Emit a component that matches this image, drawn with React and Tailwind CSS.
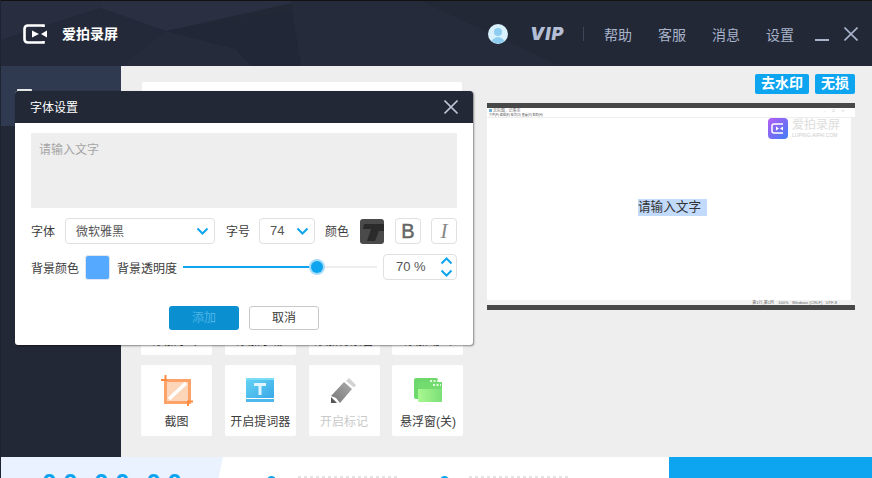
const CJK = { fontFamily: '"Liberation Sans","Noto Sans CJK SC",sans-serif' };

function Tile({ label, muted, children }) {
  return (
    <div className="w-[71px] h-[71px] bg-white rounded-[2px] flex flex-col items-center pt-[7px]">
      <div className="h-[36px] flex items-center justify-center">{children}</div>
      <span className={"mt-[5px] text-[12px] leading-[18px] whitespace-nowrap " + (muted ? "text-[#c9c9c9]" : "text-[#3c3c3c]")}>{label}</span>
    </div>
  );
}

function Chevron({ up, className = "" }) {
  return (
    <svg width="13" height="8" viewBox="0 0 13 8" className={className}>
      <path d={up ? "M1.5 6.5 L6.5 1.5 L11.5 6.5" : "M1.5 1.5 L6.5 6.5 L11.5 1.5"} fill="none" stroke="#0ea5f0" strokeWidth="2" />
    </svg>
  );
}

export default function App() {
  return (
    <div style={CJK} className="relative w-[872px] h-[478px] overflow-hidden flex flex-col bg-[#eeeeee] border-l border-[#1d2330]">
      <header className="relative h-[66px] shrink-0 bg-[#222836] flex items-center border-t border-[#111]">
        <svg className="absolute inset-0" width="872" height="66" viewBox="0 0 872 66">
          <polygon points="0,0 100,0 100,7 0,39" fill="#282e3f" />
          <polygon points="100,7 165,30 120,65 0,65 0,39" fill="#232938" />
          <polygon points="100,0 300,0 165,30 100,7" fill="#2a3042" />
          <polygon points="165,30 235,48 250,65 120,65" fill="#252b3a" />
          <polygon points="165,30 290,10 300,65 250,65 235,48" fill="#212736" />
          <polygon points="290,0 420,0 560,65 300,65" fill="#252b3b" />
        </svg>
        <div className="relative flex items-center ml-[22px]">
          <svg width="24" height="20" viewBox="0 0 24 20">
            <path d="M20.5 3 V1.5 H5 Q1.5 1.5 1.5 5 V15 Q1.5 18.5 5 18.5 H20.5 V17" fill="none" stroke="#fff" strokeWidth="2.6" />
            <polygon points="9,6.5 16,10 9,13.5" fill="#fff" />
            <polygon points="24,6.5 18,10 24,13.5" fill="#fff" />
          </svg>
          <span className="ml-[15px] text-white text-[14px] font-bold leading-none">爱拍录屏</span>
        </div>
        <div className="relative ml-auto flex items-center text-[#a9b4cb] text-[14px] pr-[14px]">
          <svg width="20" height="20" viewBox="0 0 20 20" className="mr-[22px]">
            <circle cx="10" cy="10" r="10" fill="#d8f1fd" />
            <circle cx="10" cy="8" r="4" fill="#8fcdf0" />
            <path d="M3.5 17 Q10 9 16.5 17 Q10 22 3.5 17" fill="#8fcdf0" />
          </svg>
          <span className="w-[38px] italic font-black text-[18px] leading-none tracking-[1px] text-[#b4bed4] whitespace-nowrap" style={{ fontFamily: 'Inter,sans-serif' }}>VIP</span>
          <span className="w-px h-[14px] bg-[#3d4659] ml-[15px] mr-[20px]"></span>
          <span className="mt-[3px]">帮助</span>
          <span className="ml-[26px] mt-[3px]">客服</span>
          <span className="ml-[26px] mt-[3px]">消息</span>
          <span className="ml-[26px] mt-[3px]">设置</span>
          <span className="ml-[21px] w-[14px] h-[2px] bg-[#a9b4cb] mt-[12px]"></span>
          <svg width="14" height="14" viewBox="0 0 14 14" className="ml-[15px]">
            <path d="M0.5 0.5 L13.5 13.5 M13.5 0.5 L0.5 13.5" stroke="#a9b4cb" strokeWidth="1.6" />
          </svg>
        </div>
      </header>

      <div className="flex flex-1 min-h-0">
        <aside className="w-[120px] shrink-0 bg-[#222836] flex flex-col">
          <div className="h-[60px] bg-[#2f3a50] pt-[23px]">
            <div className="ml-[16px] w-[15px] h-[2px] bg-[#e8e8e8] rounded-t-[1px]"></div>
          </div>
        </aside>
        <main className="flex-1 flex pl-[20px] pt-[16px]">
          <section className="w-[322px] shrink-0 flex flex-col">
            <div className="mx-[1px] h-[48px] bg-white rounded-[2px]"></div>
            <div className="mt-[154px] grid grid-cols-[71px_71px_71px_71px] gap-x-[12.8px] gap-y-[10px]">
              <Tile label="添加水印"><span></span></Tile>
              <Tile label="添加字幕"><span></span></Tile>
              <Tile label="添加背景音"><span></span></Tile>
              <Tile label="添加动画"><span></span></Tile>
              <Tile label="截图">
                <svg width="32" height="31" viewBox="0 0 32 31">
                  <rect x="4.5" y="5.5" width="24" height="22" fill="#fdd6ba" stroke="#fda268" strokeWidth="3" />
                  <path d="M8 24 L25 8" stroke="#fff" strokeWidth="3.5" />
                  <path d="M0 5 H6 M4.5 0 V5 M26 26.5 H32 M27 26 V31" stroke="#fd8b3f" strokeWidth="2" />
                </svg>
              </Tile>
              <Tile label="开启提词器">
                <svg width="28" height="24" viewBox="0 0 28 24">
                  <defs>
                    <linearGradient id="tg" x1="0" y1="0" x2="1" y2="1">
                      <stop offset="0" stopColor="#66d4f3" />
                      <stop offset="1" stopColor="#3aa9e8" />
                    </linearGradient>
                  </defs>
                  <rect width="28" height="20" rx="1" fill="url(#tg)" />
                  <rect y="21" width="28" height="3" fill="#4cb8ec" />
                  <rect y="0" width="28" height="2" fill="#7bdcf5" />
                  <path d="M8 6.5 H20 M14 6.5 V17" stroke="#dff4fd" strokeWidth="3" />
                </svg>
              </Tile>
              <Tile label="开启标记" muted>
                <svg width="26" height="25" viewBox="0 0 26 25">
                  <defs>
                    <linearGradient id="mg" x1="0" y1="1" x2="1" y2="0">
                      <stop offset="0" stopColor="#777" />
                      <stop offset="1" stopColor="#aaa" />
                    </linearGradient>
                  </defs>
                  <polygon points="0,18 13,4 21,11 9,25 5,20" fill="url(#mg)" />
                  <polygon points="15,3 18,0 25,7 23,9.5" fill="#d2d2d2" />
                  <polygon points="0,19 6,25 0,25" fill="#555" />
                </svg>
              </Tile>
              <Tile label="悬浮窗(关)">
                <svg width="28" height="24" viewBox="0 0 28 24">
                  <defs>
                    <linearGradient id="gg" x1="0" y1="0" x2="1" y2="0">
                      <stop offset="0" stopColor="#a9f890" />
                      <stop offset="1" stopColor="#7cdf78" />
                    </linearGradient>
                  </defs>
                  <rect width="24" height="21" rx="2" fill="#6ed86c" />
                  <rect x="4" y="4" width="24" height="20" rx="1" fill="url(#gg)" />
                  <rect x="4" y="4" width="24" height="7" fill="#72dc70" />
                  <path d="M16 3 H25 M19 7 H27" stroke="#e2fadc" strokeWidth="2" strokeDasharray="2 1.5" />
                </svg>
              </Tile>
            </div>
          </section>

          <section className="ml-[24px] w-[368px] flex flex-col">
            <div className="h-[20px] -mt-[8px] flex justify-end gap-[6px]">
              <span className="w-[54px] bg-[#0ea5f0] rounded-[2px] text-white text-[14px] font-bold leading-[19px] text-center">去水印</span>
              <span className="w-[40px] bg-[#0ea5f0] rounded-[2px] text-white text-[14px] font-bold leading-[19px] text-center">无损</span>
            </div>
            <div className="mt-[9px] relative h-[207px] bg-white border-y-[5px] border-y-[#484848] flex flex-col">
              <div className="h-[5px] flex items-center pl-[2px]">
                <span className="w-[3px] h-[3px] bg-[#6fb3d9] mr-[1px]"></span>
                <span className="text-[4px] text-[#777] leading-none whitespace-nowrap">无标题 - 记事本</span>
                <span className="ml-auto mr-[4px] text-[4px] leading-none text-[#aaa] tracking-[7px]">-□×</span>
              </div>
              <div className="h-[4px] pl-[2px] flex items-center">
                <span className="text-[3px] text-[#555] leading-none whitespace-nowrap">文件(F) 编辑(E) 格式(O) 查看(V) 帮助(H)</span>
              </div>
              <div className="flex-1 min-h-0 flex">
                <div className="flex-1 flex items-center justify-center pb-[4px] border-t border-[#eeeeee]">
                  <span className="ml-[7px] bg-[#c2dafc] text-[#333] text-[12.6px] leading-[17px] pr-[6px]">请输入文字</span>
                </div>
                <div className="w-[4px] bg-[#eeeeee]"></div>
              </div>
              <div className="h-[5px] bg-[#f2f2f2] flex items-center justify-end pr-[18px]">
                <span className="text-[4px] leading-none text-[#666] whitespace-nowrap">第1行,第1列 &nbsp;&nbsp; 100% &nbsp; Windows (CRLF) &nbsp; UTF-8</span>
              </div>
              <div className="absolute right-[14px] top-[10px] flex items-center">
                <svg width="20" height="21" viewBox="0 0 20 21">
                  <defs>
                    <linearGradient id="wm" x1="0" y1="0" x2="1" y2="1">
                      <stop offset="0" stopColor="#b45cf5" />
                      <stop offset="1" stopColor="#3f7df5" />
                    </linearGradient>
                  </defs>
                  <rect width="20" height="21" rx="4" fill="url(#wm)" />
                  <path d="M15 6 H6 Q4 6 4 8 V13 Q4 15 6 15 H15" fill="none" stroke="#fff" strokeWidth="1.5" />
                  <polygon points="8,8.5 11,10.5 8,12.5" fill="#fff" />
                  <polygon points="15,8.5 12,10.5 15,12.5" fill="#fff" />
                </svg>
                <div className="ml-[4px] flex flex-col items-start w-[49px]">
                  <span className="text-[12px] leading-[13px] text-[#dddddd]">爱拍录屏</span>
                  <span className="text-[5px] leading-[6px] text-[#cccccc] whitespace-nowrap">LUPING.AIPAI.COM</span>
                </div>
              </div>
            </div>
          </section>
        </main>
      </div>

      <footer className="h-[21px] shrink-0 bg-white flex overflow-hidden">
        <div className="w-[222px] shrink-0 bg-[#eaf2ff] [clip-path:polygon(0_0,100%_0,98%_100%,0_100%)] pl-[41px] pt-[13px]">
          <div className="text-[26px] leading-none font-bold tracking-[6.5px] text-[#0ea5f0] whitespace-nowrap">
            00<span className="-mx-[2.5px]">:</span>00<span className="-mx-[2.5px]">:</span>00
          </div>
        </div>
        <span className="ml-[44px] mt-[19px] w-[9px] h-[9px] rounded-full bg-[#0ea5f0] shrink-0"></span>
        <span className="ml-[22px] mt-[19px] w-[99px] border-t-[3px] border-dotted border-[#e4e4e4] shrink-0"></span>
        <span className="ml-[43px] mt-[19px] w-[9px] h-[9px] rounded-full bg-[#0ea5f0] shrink-0"></span>
        <span className="ml-[20px] mt-[19px] w-[99px] border-t-[3px] border-dotted border-[#e4e4e4] shrink-0"></span>
        <div className="ml-auto w-[203px] bg-[#0ea5f0]"></div>
      </footer>

      <div className="absolute left-[14px] top-[91px] w-[458px] h-[254px] bg-white rounded-[3px] shadow-[1px_1px_2px_rgba(0,0,0,0.45)] flex flex-col overflow-hidden">
        <div className="h-[32px] bg-[#222836] flex items-center pl-[15px] pr-[15px] shrink-0">
          <span className="text-white text-[12px] mt-[2px]">字体设置</span>
          <svg width="14" height="14" viewBox="0 0 14 14" className="ml-auto">
            <path d="M0.5 0.5 L13.5 13.5 M13.5 0.5 L0.5 13.5" stroke="#b9c1d2" strokeWidth="1.6" />
          </svg>
        </div>
        <div className="px-[16px] pt-[10px] flex flex-col">
          <div className="h-[75px] bg-[#eeeeee] pl-[8px] pt-[8px] text-[12px] leading-[18px] text-[#a5a5a5]">请输入文字</div>
          <div className="mt-[10px] h-[26px] flex items-center text-[12px] text-[#3c3c3c]">
            <span className="w-[34px] mt-[2px]">字体</span>
            <div className="w-[150px] h-[26px] border border-[#e0e0e0] rounded-[4px] flex items-center pl-[10px] pr-[5px] text-[#555]">
              <span className="mt-[2px]">微软雅黑</span>
              <Chevron className="ml-auto" />
            </div>
            <span className="ml-[11px] w-[33px] mt-[2px]">字号</span>
            <div className="w-[56px] h-[26px] border border-[#e0e0e0] rounded-[4px] flex items-center pl-[10px] pr-[5px] text-[#555] text-[13px]">
              <span>74</span>
              <Chevron className="ml-auto" />
            </div>
            <span className="ml-[10px] w-[35px] mt-[2px]">颜色</span>
            <div className="w-[24px] h-[25px] rounded-[3px] bg-[#4a4a4a] relative overflow-hidden">
              <svg width="24" height="25" viewBox="0 0 24 25" className="absolute inset-0">
                <path d="M4 5 H24 V12 H19 L15 22 H7 L11 10 H3 Z" fill="#2b2b2b" />
              </svg>
            </div>
            <div className="ml-[11px] w-[26px] h-[26px] border border-[#e0e0e0] rounded-[4px] flex items-center justify-center text-[#666] text-[20px] leading-none [-webkit-text-stroke:0.5px_#666]" style={{ fontFamily: '"Liberation Sans",sans-serif' }}>B</div>
            <div className="ml-[10px] w-[26px] h-[26px] border border-[#e0e0e0] rounded-[4px] flex items-center justify-center text-[#888] text-[21px] leading-none italic" style={{ fontFamily: '"Liberation Serif",serif' }}>I</div>
          </div>
          <div className="mt-[10px] h-[26px] flex items-center text-[12px] text-[#3c3c3c]">
            <span className="w-[54px] mt-[3px]">背景颜色</span>
            <span className="w-[25px] h-[25px] rounded-[3px] bg-[#55a9ff] border border-[#e0e6f0]"></span>
            <span className="ml-[7px] w-[66px] mt-[3px]">背景透明度</span>
            <div className="relative w-[194px] h-[2px] bg-[#eeeeee]">
              <div className="h-full w-[133px] bg-[#0ea5f0]"></div>
              <span className="absolute left-[128px] -top-[5px] w-[12px] h-[12px] rounded-full bg-[#0ea5f0] ring-[2px] ring-[#a6dcfa]"></span>
            </div>
            <div className="ml-[6px] w-[74px] h-[26px] border border-[#e0e0e0] rounded-[4px] flex items-center pl-[12px] pr-[3px] text-[#555] text-[13px]">
              <span>70 %</span>
              <div className="ml-auto flex flex-col gap-[4px]">
                <Chevron up />
                <Chevron />
              </div>
            </div>
          </div>
          <div className="mt-[26px] flex justify-center gap-[10px] text-[12px]">
            <div className="w-[70px] h-[24px] bg-[#0a8fd0] rounded-[3px] text-[#4cb4e6] flex items-center justify-center">添加</div>
            <div className="w-[70px] h-[24px] border border-[#c8c8c8] rounded-[3px] text-[#3c3c3c] flex items-center justify-center">取消</div>
          </div>
        </div>
      </div>
    </div>
  );
}
